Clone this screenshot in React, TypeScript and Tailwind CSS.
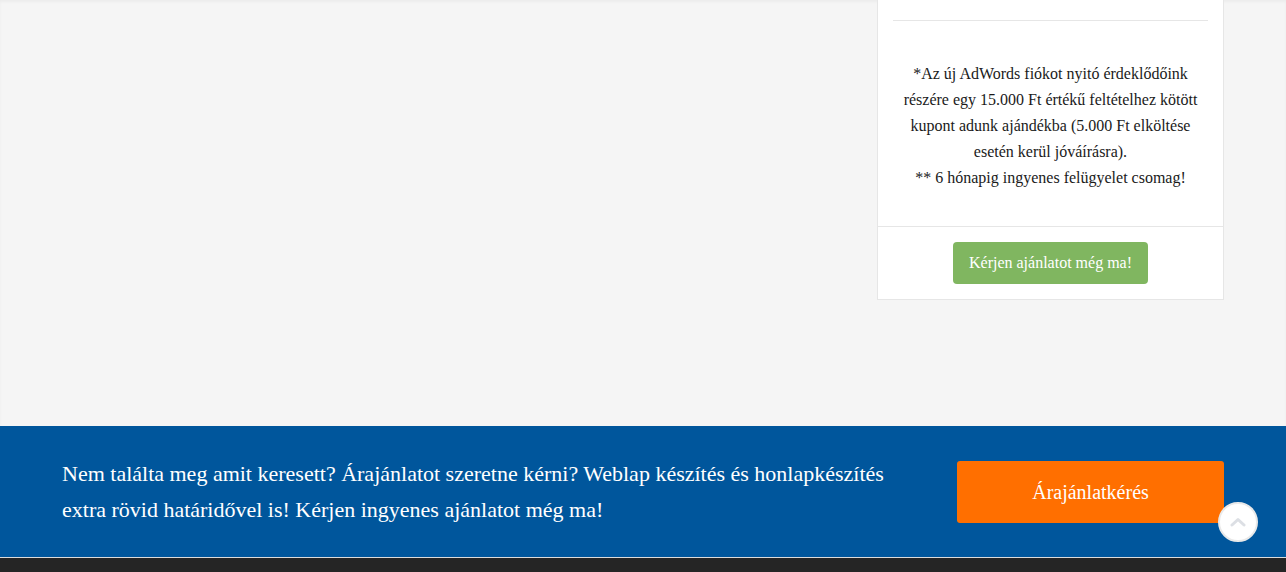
import React from "react";

export default function App() {
  const serif = { fontFamily: '"Liberation Serif", "Times New Roman", serif' };
  return (
    <div className="relative w-full h-[572px] overflow-hidden" style={serif}>
      <div className="h-[426px] bg-[#f5f5f5] shadow-[inset_0_2px_3px_rgba(0,0,0,0.04)]">
        <div className="w-[1162px] mx-auto flex justify-end">
          <div className="w-[347px] h-[300px] bg-white border-x border-b border-[#e6e6e6] flex flex-col">
            <div className="px-[15px] pt-[20px]">
              <div className="h-px bg-[#e6e6e6]" />
            </div>
            <div className="pt-[40px] pb-[35px] px-[10px] text-center text-[16px] leading-[26px] text-[#1a1a1a]">
              <p>
                *Az új AdWords fiókot nyitó érdeklődőink
                <br />
                részére egy 15.000 Ft értékű feltételhez kötött
                <br />
                kupont adunk ajándékba (5.000 Ft elköltése
                <br />
                esetén kerül jóváírásra).
                <br />
                ** 6 hónapig ingyenes felügyelet csomag!
              </p>
            </div>
            <div className="border-t border-[#e6e6e6] flex justify-center pt-[15px]">
              <button className="w-[195px] h-[42px] rounded-[4px] bg-[#80b660] text-white text-[16px]">
                Kérjen ajánlatot még ma!
              </button>
            </div>
          </div>
        </div>
      </div>
      <div className="h-[131px] bg-[#00569c]">
        <div className="w-[1162px] mx-auto h-full flex items-center justify-between">
          <p className="w-[860px] text-white text-[22px] leading-[36px]">
            Nem találta meg amit keresett? Árajánlatot szeretne kérni? Weblap készítés és honlapkészítés extra rövid határidővel is! Kérjen ingyenes ajánlatot még ma!
          </p>
          <button className="w-[267px] h-[62px] rounded-[3px] bg-[#ff6f00] text-white text-[20px]">
            Árajánlatkérés
          </button>
        </div>
      </div>
      <div className="h-px bg-[#dcdcdc]" />
      <div className="h-[14px] bg-[#252525]" />
      <div className="absolute right-[28px] bottom-[30px] w-[40px] h-[40px] rounded-full bg-white border-2 border-[#e9e9e9] flex items-center justify-center">
        <svg width="16" height="10" viewBox="0 0 16 10" fill="none">
          <path d="M2 8 L8 2.5 L14 8" stroke="#dcdfe4" strokeWidth="3" strokeLinecap="round" strokeLinejoin="round" />
        </svg>
      </div>
    </div>
  );
}
